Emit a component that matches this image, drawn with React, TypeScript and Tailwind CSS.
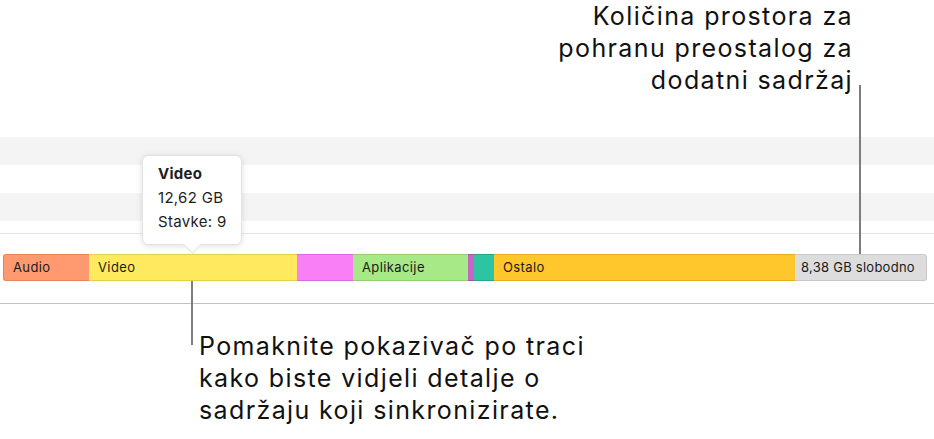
const segments = [
  { label: 'Audio', width: 86, color: 'bg-[#ff9a70]', border: 'border-[#e8845c]', round: 'rounded-l-[3px]' },
  { label: 'Video', width: 208, color: 'bg-[#ffea5f]', border: 'border-[#e3cf4c]', round: '' },
  { label: '', width: 56, color: 'bg-[#f97ff7]', border: 'border-[#dd69db]', round: '' },
  { label: 'Aplikacije', width: 115, color: 'bg-[#a7e887]', border: 'border-[#8fcf70]', round: '' },
  { label: '', width: 6, color: 'bg-[#c566c6]', border: 'border-[#a94fab]', round: '' },
  { label: '', width: 20, color: 'bg-[#2cc4a1]', border: 'border-[#22a987]', round: '' },
  { label: 'Ostalo', width: 301, color: 'bg-[#ffc72c]', border: 'border-[#e5ae1c]', round: '' },
];

function Tooltip() {
  return (
    <div className="absolute left-[142px] top-[155px] w-[100px]">
      <div className="relative h-[90px] rounded-[6px] border border-[#e2e2e2] bg-white shadow-[0_1px_6px_rgba(0,0,0,0.12)]">
        <div className="absolute bottom-[-7px] left-[43px] h-[13px] w-[13px] rotate-45 border-b border-r border-[#e2e2e2] bg-white" />
        <div className="relative pl-[15px] pt-[6px] text-[15px] leading-[24px] tracking-[0.02em] text-[#1e1e1e]">
          <div className="font-bold">Video</div>
          <div>12,62 GB</div>
          <div>Stavke: 9</div>
        </div>
      </div>
    </div>
  );
}

export default function App() {
  return (
    <div className="relative h-[439px] w-[934px] overflow-hidden bg-white font-['Inter','Noto_Sans',sans-serif] text-[#111]">
      <div className="flex h-[137px] justify-end pr-[81px]">
        <p className="text-right text-[25px] leading-[32px] tracking-[0.055em]">
          Količina prostora za
          <br />
          pohranu preostalog za
          <br />
          dodatni sadržaj
        </p>
      </div>
      <div className="h-[28px] bg-[#f4f4f4]" />
      <div className="h-[28px]" />
      <div className="h-[28px] bg-[#f4f4f4]" />
      <div className="h-[12px]" />
      <div className="h-px bg-[#e6e6e6]" />
      <div className="h-[20px]" />

      <div className="ml-[3px] flex h-[27px] w-[924px]">
        {segments.map((s, i) => (
          <div
            key={i}
            style={{ width: s.width }}
            className={`flex shrink-0 items-center border-y ${i === 0 ? 'border-l' : ''} ${s.color} ${s.border} ${s.round} ${s.label ? 'pl-[9px]' : ''} text-[13px] tracking-[0.03em] text-[#1a1a1a]`}
          >
            {s.label}
          </div>
        ))}
        <div className="flex flex-1 items-center rounded-r-[3px] border border-l-0 border-[#c9c9c9] bg-[#dddddd] pl-[6px] text-[13px] tracking-[0.02em] text-[#1a1a1a]">
          8,38 GB slobodno
        </div>
      </div>

      <div className="h-[22px]" />
      <div className="h-px bg-[#c4c4c4]" />

      <div className="pl-[199px] pt-[26px]">
        <p className="text-[25px] leading-[32px] tracking-[0.055em]">
          Pomaknite pokazivač po traci
          <br />
          kako biste vidjeli detalje o
          <br />
          sadržaju koji sinkronizirate.
        </p>
      </div>

      <Tooltip />
      <div className="absolute left-[859px] top-[85px] h-[169px] w-[2px] bg-[#7d7d7d]" />
      <div className="absolute left-[191px] top-[281px] h-[64px] w-[2px] bg-[#7d7d7d]" />
    </div>
  );
}
